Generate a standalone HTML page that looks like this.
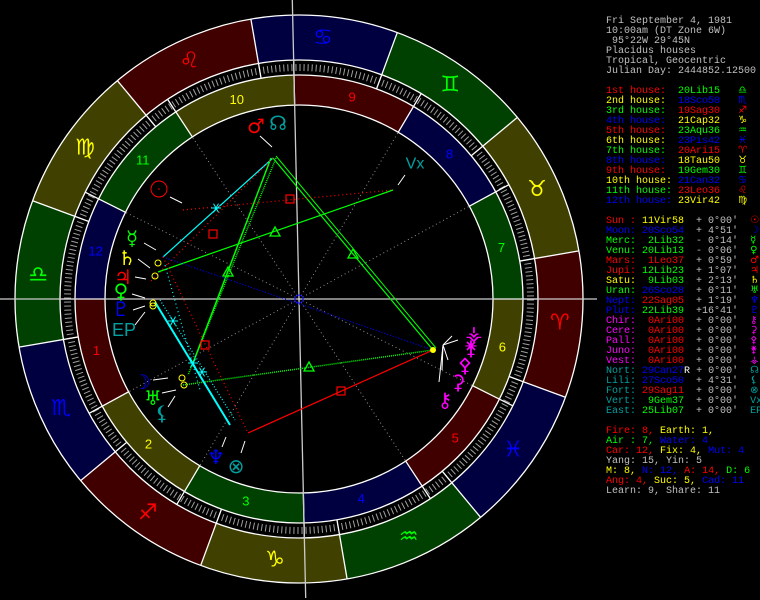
<!DOCTYPE html>
<html><head><meta charset="utf-8">
<style>
html,body{margin:0;padding:0;background:#000;width:760px;height:600px;overflow:hidden}
#c{position:absolute;left:0;top:0}
pre{position:absolute;left:606px;top:17px;margin:0;font-family:"Liberation Mono",monospace;font-size:10px;line-height:10px;color:#c0c0c0;white-space:pre}
.r{color:#f00}.y{color:#ff0}.g{color:#0f0}.b{color:#00f}.m{color:#f0f}.t{color:#00a0a0}.w{color:#fff}.s{color:#c0c0c0}
.q{font-family:"DejaVu Sans",sans-serif;font-size:10px;line-height:0}
svg text{font-family:"DejaVu Sans",sans-serif}
</style></head><body>
<svg id="c" width="760" height="600" viewBox="0 0 760 600">
<g id="rings"></g>
<g id="labels" text-anchor="middle" dominant-baseline="central">
<text id="s0" fill="#f00" font-size="22">♈&#xFE0E;</text>
<text id="s1" fill="#ff0" font-size="22">♉&#xFE0E;</text>
<text id="s2" fill="#0f0" font-size="22">♊&#xFE0E;</text>
<text id="s3" fill="#00f" font-size="22">♋&#xFE0E;</text>
<text id="s4" fill="#f00" font-size="22">♌&#xFE0E;</text>
<text id="s5" fill="#ff0" font-size="22">♍&#xFE0E;</text>
<text id="s6" fill="#0f0" font-size="22">♎&#xFE0E;</text>
<text id="s7" fill="#00f" font-size="22">♏&#xFE0E;</text>
<text id="s8" fill="#f00" font-size="22">♐&#xFE0E;</text>
<text id="s9" fill="#ff0" font-size="22">♑&#xFE0E;</text>
<text id="s10" fill="#0f0" font-size="22">♒&#xFE0E;</text>
<text id="s11" fill="#00f" font-size="22">♓&#xFE0E;</text>
<g font-size="13">
<text id="h1" fill="#f00" style="font-family:'Liberation Sans',sans-serif">1</text>
<text id="h2" fill="#ff0" style="font-family:'Liberation Sans',sans-serif">2</text>
<text id="h3" fill="#0f0" style="font-family:'Liberation Sans',sans-serif">3</text>
<text id="h4" fill="#00f" style="font-family:'Liberation Sans',sans-serif">4</text>
<text id="h5" fill="#f00" style="font-family:'Liberation Sans',sans-serif">5</text>
<text id="h6" fill="#ff0" style="font-family:'Liberation Sans',sans-serif">6</text>
<text id="h7" fill="#0f0" style="font-family:'Liberation Sans',sans-serif">7</text>
<text id="h8" fill="#00f" style="font-family:'Liberation Sans',sans-serif">8</text>
<text id="h9" fill="#f00" style="font-family:'Liberation Sans',sans-serif">9</text>
<text id="h10" fill="#ff0" style="font-family:'Liberation Sans',sans-serif">10</text>
<text id="h11" fill="#0f0" style="font-family:'Liberation Sans',sans-serif">11</text>
<text id="h12" fill="#00f" style="font-family:'Liberation Sans',sans-serif">12</text>
</g>
</g>
<g id="inner"></g>
<g text-anchor="middle" dominant-baseline="central" font-size="20">
<text x="256" y="126" fill="#f00">♂&#xFE0E;</text>
<text x="278" y="123" fill="#00a0a0">☊</text>
<text x="415" y="164" fill="#00a0a0" font-size="16" style="font-family:'Liberation Sans',sans-serif">Vx</text>
<circle cx="159" cy="189" r="8" fill="none" stroke="#f00"/>
<circle cx="159" cy="189" r="0.8" fill="#f00"/>
<text x="132" y="238" fill="#0f0">☿</text>
<text x="127" y="258" fill="#ff0">♄</text>
<text x="123" y="277" fill="#f00">♃</text>
<text x="121" y="291" fill="#0f0">♀&#xFE0E;</text>
<text x="121" y="309" fill="#00f">♇</text>
<text x="124" y="330" fill="#00a0a0" font-size="18" style="font-family:'Liberation Sans',sans-serif">EP</text>
<text x="142" y="382" fill="#00f">☽</text>
<text x="153" y="398" fill="#0f0">♅</text>
<text x="162" y="413" fill="#00a0a0">⚸</text>
<text x="216" y="457" fill="#00f">♆</text>
<text x="236" y="466" fill="#00a0a0">⊗</text>
<text x="474" y="333" fill="#f0f">⚶</text>
<text x="471" y="348" fill="#f0f">⚵</text>
<text x="465" y="365" fill="#f0f">⚴</text>
<text x="458" y="382" fill="#f0f">⚳</text>
<text x="445" y="400" fill="#f0f">⚷</text>
</g>
</svg>
<pre><span class="s">Fri September 4, 1981
10:00am (DT Zone 6W)
 95°22W 29°45N
Placidus houses
Tropical, Geocentric
Julian Day: 2444852.12500</span>

<span class="r">1st house:</span>  <span class="g">20Lib15</span>   <span class="g q">♎&#xFE0E;</span>
<span class="y">2nd house:</span>  <span class="b">18Sco50</span>   <span class="b q">♏&#xFE0E;</span>
<span class="g">3rd house:</span>  <span class="r">19Sag30</span>   <span class="r q">♐&#xFE0E;</span>
<span class="b">4th house:</span>  <span class="y">21Cap32</span>   <span class="y q">♑&#xFE0E;</span>
<span class="r">5th house:</span>  <span class="g">23Aqu36</span>   <span class="g q">♒&#xFE0E;</span>
<span class="y">6th house:</span>  <span class="b">23Pis42</span>   <span class="b q">♓&#xFE0E;</span>
<span class="g">7th house:</span>  <span class="r">20Ari15</span>   <span class="r q">♈&#xFE0E;</span>
<span class="b">8th house:</span>  <span class="y">18Tau50</span>   <span class="y q">♉&#xFE0E;</span>
<span class="r">9th house:</span>  <span class="g">19Gem30</span>   <span class="g q">♊&#xFE0E;</span>
<span class="y">10th house:</span> <span class="b">21Can32</span>   <span class="b q">♋&#xFE0E;</span>
<span class="g">11th house:</span> <span class="r">23Leo36</span>   <span class="r q">♌&#xFE0E;</span>
<span class="b">12th house:</span> <span class="y">23Vir42</span>   <span class="y q">♍&#xFE0E;</span>

<span class="r">Sun :</span> <span class="y">11Vir58</span>  + 0°00'  <span class="r q">☉</span>
<span class="b">Moon:</span> <span class="b">20Sco54</span>  + 4°51'  <span class="b q">☽</span>
<span class="g">Merc:</span>  <span class="g">2Lib32</span>  - 0°14'  <span class="g q">☿</span>
<span class="g">Venu:</span> <span class="g">20Lib13</span>  - 0°06'  <span class="g q">♀&#xFE0E;</span>
<span class="r">Mars:</span>  <span class="r">1Leo37</span>  + 0°59'  <span class="r q">♂&#xFE0E;</span>
<span class="r">Jupi:</span> <span class="g">12Lib23</span>  + 1°07'  <span class="r q">♃</span>
<span class="y">Satu:</span>  <span class="g">9Lib03</span>  + 2°13'  <span class="y q">♄</span>
<span class="g">Uran:</span> <span class="b">26Sco28</span>  + 0°11'  <span class="g q">♅</span>
<span class="b">Nept:</span> <span class="r">22Sag05</span>  + 1°19'  <span class="b q">♆</span>
<span class="b">Plut:</span> <span class="g">22Lib39</span>  +16°41'  <span class="b q">♇</span>
<span class="m">Chir:</span>  <span class="r">0Ari00</span>  + 0°00'  <span class="m q">⚷</span>
<span class="m">Cere:</span>  <span class="r">0Ari00</span>  + 0°00'  <span class="m q">⚳</span>
<span class="m">Pall:</span>  <span class="r">0Ari00</span>  + 0°00'  <span class="m q">⚴</span>
<span class="m">Juno:</span>  <span class="r">0Ari00</span>  + 0°00'  <span class="m q">⚵</span>
<span class="m">Vest:</span>  <span class="r">0Ari00</span>  + 0°00'  <span class="m q">⚶</span>
<span class="t">Nort:</span> <span class="b">29Can27</span><span class="w">R</span> + 0°00'  <span class="t q">☊</span>
<span class="t">Lili:</span> <span class="b">27Sco50</span>  + 4°31'  <span class="t q">⚸</span>
<span class="t">Fort:</span> <span class="r">29Sag11</span>  + 0°00'  <span class="t q">⊗</span>
<span class="t">Vert:</span>  <span class="g">9Gem37</span>  + 0°00'  <span class="t">Vx</span>
<span class="t">East:</span> <span class="g">25Lib07</span>  + 0°00'  <span class="t">EP</span>

<span class="r">Fire: 8,</span> <span class="y">Earth: 1,</span>
<span class="g">Air : 7,</span> <span class="b">Water: 4</span>
<span class="r">Car: 12,</span> <span class="y">Fix: 4,</span> <span class="b">Mut: 4</span>
Yang: 15, Yin: 5
<span class="y">M: 8,</span> <span class="b">N: 12,</span> <span class="r">A: 14,</span> <span class="g">D: 6</span>
<span class="r">Ang: 4,</span> <span class="y">Suc: 5,</span> <span class="b">Cad: 11</span>
Learn: 9, Share: 11</pre>
<script>
(function(){
var NS="http://www.w3.org/2000/svg",cx=299,cy=299,R0=284,R1=239,R2=224,R3=194,ASC=200.25;
function th(l){return (180+l-ASC)*Math.PI/180;}
function pt(l,r){var a=th(l);return [cx+r*Math.cos(a),cy-r*Math.sin(a)];}
function el(p,t,at){var e=document.createElementNS(NS,t);for(var k in at)e.setAttribute(k,at[k]);p.appendChild(e);return e;}
function sector(l1,l2,ra,rb){var a=pt(l1,ra),b=pt(l2,ra),c=pt(l2,rb),d=pt(l1,rb);var lg=((l2-l1+360)%360)>180?1:0;
return "M"+a+" A"+ra+","+ra+" 0 "+lg+" 0 "+b+" L"+c+" A"+rb+","+rb+" 0 "+lg+" 1 "+d+"Z";}
var g=document.getElementById("rings"),ins=document.getElementById("inner");
var fills=["#400000","#404000","#004000","#000040"];
for(var i=0;i<12;i++){el(g,"path",{d:sector(i*30,i*30+30,R0,R1),fill:fills[i%4]});
 var p=pt(i*30+15,262);var t=document.getElementById("s"+i);t.setAttribute("x",p[0]);t.setAttribute("y",p[1]);}
var cus=[200.25,228.83,259.5,291.53,323.6,353.7,20.25,48.83,79.5,111.53,143.6,173.7];
for(var h=0;h<12;h++){var a=cus[h],b=cus[(h+1)%12];if(b<a)b+=360;
 el(g,"path",{d:sector(a,b,R2,R3),fill:fills[h%4]});
 var p=pt((a+b)/2,209);var t=document.getElementById("h"+(h+1));t.setAttribute("x",p[0]);t.setAttribute("y",p[1]);}
for(var d=0;d<360;d++){var a=pt(d,228),b=pt(d,235);el(g,"line",{x1:a[0],y1:a[1],x2:b[0],y2:b[1],stroke:"#a0a0a0","stroke-width":1});}
for(var i=0;i<12;i++){var a=pt(i*30,R0),b=pt(i*30,R2);el(g,"line",{x1:a[0],y1:a[1],x2:b[0],y2:b[1],stroke:"#fff","stroke-width":1.3});}
for(var h=0;h<12;h++){var a=pt(cus[h],R1),b=pt(cus[h],R3);el(g,"line",{x1:a[0],y1:a[1],x2:b[0],y2:b[1],stroke:"#fff","stroke-width":1.3});
 if(h%3!=0){var c=pt(cus[h],R3);el(g,"line",{x1:cx,y1:cy,x2:c[0],y2:c[1],stroke:"#909090","stroke-width":1,"stroke-dasharray":"1 3"});}}
[R0,R1,R2,R3].forEach(function(r){el(g,"circle",{cx:cx,cy:cy,r:r,fill:"none",stroke:"#fff","stroke-width":1.3});});
el(g,"line",{x1:0,y1:299,x2:597,y2:299,stroke:"#ccc","stroke-width":1.3});
el(g,"line",{x1:292.3,y1:0,x2:305.7,y2:598,stroke:"#ccc","stroke-width":1.3});
function L(x1,y1,x2,y2,c,dash,w){var o={x1:x1,y1:y1,x2:x2,y2:y2,stroke:c,"stroke-width":w||1.2};if(dash)o["stroke-dasharray"]=dash;el(ins,"line",o);}
L(273,158,163,257,"#0ff");
L(271,158,193,363,"#0f0",null,1.5);L(276,158,188,375,"#0f0","1 1",1.5);
L(273,158,433,350,"#0f0",null,1.2);L(276,156,436,348,"#0f0",null,1);
L(273,158,150,282,"#f00","1 3");
L(183,210,393,190,"#f00","1 3");
L(393,190,158,272,"#0f0");
L(163,257,433,350,"#00f","1 2");
L(183,385,433,350,"#0f0","1 1",1.5);
L(433,350,248,433,"#f00");
L(163,257,248,433,"#f00","1 3");
L(155,302,230,425,"#0ff",null,2);L(160,300,235,420,"#0ff","1 2");L(165,265,200,390,"#0ff","1 3");
function sq(x,y){el(ins,"rect",{x:x-4,y:y-4,width:8,height:8,fill:"none",stroke:"#f00","stroke-width":1.2});}
sq(290,199);sq(213,234);sq(205,345);sq(341,391);
function tri(x,y){el(ins,"path",{d:"M"+(x-5)+","+(y+4)+" L"+x+","+(y-5)+" L"+(x+5)+","+(y+4)+"Z",fill:"none",stroke:"#0f0","stroke-width":1.3});}
tri(275,232);tri(228,272);tri(353,254);tri(309,367);
function star(x,y){for(var k=0;k<3;k++){var a=k*Math.PI/3;el(ins,"line",{x1:x-5*Math.cos(a),y1:y-5*Math.sin(a),x2:x+5*Math.cos(a),y2:y+5*Math.sin(a),stroke:"#0ff"});}}
star(216,208);star(173,321);star(193,363);star(202,372);
el(ins,"circle",{cx:299,cy:299,r:4,fill:"none",stroke:"#00f"});
el(ins,"circle",{cx:433,cy:350,r:3,fill:"#ff0"});
[[158,263],[155,276],[153,303],[153,306],[182,378],[184,385]].forEach(function(p){el(ins,"circle",{cx:p[0],cy:p[1],r:3,fill:"none",stroke:"#ff0"});});
var wl=[[260,136,272,147],[405,175,398,185],[170,197,182,203],[144,243,156,250],[138,259,150,268],[135,277,146,279],[132,294,145,298],[133,310,145,306],[135,325,145,312],[153,380,168,378],[162,393,176,390],[168,407,175,396],[222,447,226,437],[241,453,245,441],[443,345,452,336],[443,345,458,340],[443,345,448,360],[443,345,442,370],[443,345,439,382]];
wl.forEach(function(a){L(a[0],a[1],a[2],a[3],"#fff",null,1);});
})();
</script>
</body></html>
